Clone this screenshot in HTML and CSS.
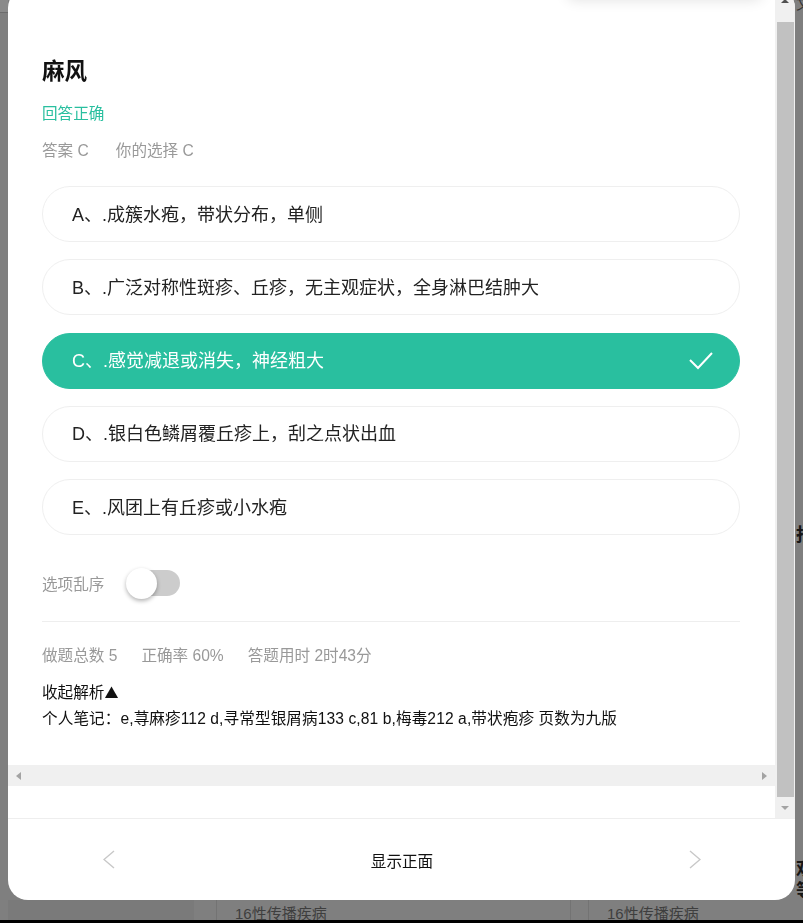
FILE: index.html
```html
<!DOCTYPE html>
<html lang="zh-CN">
<head>
<meta charset="utf-8">
<title>麻风</title>
<link rel="stylesheet" href="styles.css">
</head>
<body>
<div class="page">
  <div class="gutter-left"><div class="gutter-head"></div></div>
  <div class="page-main">
    <div class="page-fill"></div>
    <div class="card-row">
      <div class="side-col"></div>
      <div class="gap-col"></div>
      <div class="card-col">16性传播疾病</div>
      <div class="gap-col2"></div>
      <div class="card-col card-col-2">16性传播疾病</div>
    </div>
  </div>
  <div class="gutter-right">
    <div class="frag frag-top">文</div>
    <div class="frag frag-mid">报</div>
    <div class="frag frag-b1">观</div>
    <div class="frag frag-b2">等</div>
  </div>
</div>

<div class="toast-shadow"></div>

<div class="modal">
  <div class="main">
    <div class="content">
      <div class="inner">
        <h1 class="title">麻风</h1>
        <div class="status">回答正确</div>
        <div class="answer"><span>答案 C</span><span>你的选择 C</span></div>
        <div class="options">
          <div class="option">A、.成簇水疱，带状分布，单侧</div>
          <div class="option">B、.广泛对称性斑疹、丘疹，无主观症状，全身淋巴结肿大</div>
          <div class="option selected">C、.感觉减退或消失，神经粗大
            <svg class="check" width="24" height="24" viewBox="0 0 24 24"><polyline points="1,11 9,19 23,4" fill="none" stroke="#fff" stroke-width="2"/></svg>
          </div>
          <div class="option">D、.银白色鳞屑覆丘疹上，刮之点状出血</div>
          <div class="option">E、.风团上有丘疹或小水疱</div>
        </div>
        <div class="shuffle">
          <span>选项乱序</span>
          <div class="toggle"><div class="knob"></div></div>
        </div>
        <div class="divider"></div>
        <div class="stats"><span>做题总数 5</span><span>正确率 60%</span><span>答题用时 2时43分</span></div>
        <div class="collapse">收起解析<span class="tri">▲</span></div>
        <div class="notes">个人笔记：e,荨麻疹112 d,寻常型银屑病133 c,81 b,梅毒212 a,带状疱疹 页数为九版</div>
      </div>
      <div class="hbar"><span class="arr-left"></span><span class="arr-right"></span></div>
      <div class="spacer"></div>
    </div>
    <div class="vbar">
      <div class="vbtn-up"><span class="arr-up"></span></div>
      <div class="vtrack"><div class="vthumb"></div></div>
      <div class="vbtn-down"><span class="arr-down"></span></div>
    </div>
  </div>
  <div class="footer">
    <svg width="12" height="20" viewBox="0 0 12 20"><polyline points="11,1 1,9.5 11,18" fill="none" stroke="#c8c8c8" stroke-width="1.4"/></svg>
    <span class="footer-text">显示正面</span>
    <svg width="12" height="20" viewBox="0 0 12 20"><polyline points="1,1 11,9.5 1,18" fill="none" stroke="#c8c8c8" stroke-width="1.4"/></svg>
  </div>
</div>
</body>
</html>
```

FILE: styles.css
```css
* { box-sizing: border-box; }
html, body { margin: 0; padding: 0; }
body {
  background: #000;
  height: 923px;
  overflow: hidden;
  font-family: "Liberation Sans", "Noto Sans CJK SC", sans-serif;
}
.page {
  height: 920px;
  background: #7f7f7f;
  display: flex;
  overflow: hidden;
}
.gutter-left { width: 8px; }
.gutter-head { height: 13px; background: #8a8a8a; border-bottom: 1px solid #6c6c6c; }
.page-main { width: 788px; display: flex; flex-direction: column; }
.page-fill { flex: 1; }
.card-row { height: 20px; display: flex; overflow: hidden; }
.side-col { width: 186px; background: #7a7a7a; }
.gap-col { width: 22px; }
.card-col {
  width: 354px;
  border-left: 1px solid #737373;
  padding: 4px 0 0 18px;
  font-size: 15px;
  line-height: 20px;
  color: #3e3e3e;
  white-space: nowrap;
}
.gap-col2 { width: 18px; border-left: 1px solid #737373; }
.card-col-2 { width: auto; flex: 1; }
.gutter-right { flex: 1; overflow: hidden; position: relative; }
.frag { font-size: 18px; font-weight: bold; color: #161616; line-height: 20px; white-space: nowrap; }
.frag-top { margin-top: -6px; font-size: 15px; font-weight: normal; color: #333; }
.frag-mid { margin-top: 511px; }
.frag-b1 { margin-top: 314px; }
.frag-b2 { margin-top: 2px; }

.toast-shadow {
  position: fixed;
  top: -40px;
  left: 567px;
  width: 195px;
  height: 40px;
  background: #fff;
  border-radius: 8px;
  box-shadow: 0 0 14px rgba(0, 0, 0, 0.12);
  z-index: 2;
}

.modal {
  position: fixed;
  left: 8px;
  top: -12px;
  width: 787px;
  height: 912px;
  background: #fff;
  border-radius: 20px;
  overflow: hidden;
  display: flex;
  flex-direction: column;
  z-index: 1;
}
.main { height: 830px; display: flex; }
.content { flex: 1; display: flex; flex-direction: column; min-width: 0; }
.inner { flex: 1; padding: 70px 35px 0 34px; }
.title {
  margin: 0;
  font-size: 22.5px;
  line-height: 28px;
  font-weight: bold;
  color: #111;
}
.status { margin-top: 18px; font-size: 15.6px; line-height: 20px; color: #29bf9f; }
.answer { margin-top: 17px; font-size: 15.6px; line-height: 20px; color: #999; display: flex; gap: 27px; }
.options { margin-top: 25px; display: flex; flex-direction: column; gap: 17.25px; }
.option {
  height: 56px;
  border: 1px solid #efefef;
  border-radius: 28px;
  padding: 0 26px 3px 29px;
  display: flex;
  align-items: center;
  justify-content: space-between;
  font-size: 18px;
  color: #222;
}
.option.selected { background: #29bf9f; border-color: #29bf9f; color: #fff; }
.check { flex: none; margin-top: 3px; }
.shuffle {
  margin-top: 33px;
  height: 30px;
  display: flex;
  align-items: center;
  gap: 22px;
  font-size: 15.6px;
  color: #999;
}
.toggle {
  position: relative;
  width: 52px;
  height: 26px;
  border-radius: 13px;
  background: #ccc;
  margin-left: 2px;
}
.knob {
  position: absolute;
  left: -2px;
  top: -2px;
  width: 31px;
  height: 31px;
  border-radius: 50%;
  background: #fff;
  box-shadow: 0 2px 4px rgba(0, 0, 0, 0.3);
}
.divider { margin-top: 23px; height: 1px; background: #eee; }
.stats { margin-top: 24px; font-size: 15.6px; line-height: 20px; color: #999; display: flex; gap: 24px; }
.collapse { margin-top: 13px; font-size: 15.6px; line-height: 26px; color: #111; }
.tri { font-family: "Noto Sans CJK SC", sans-serif; font-size: 14px; }
.notes { font-size: 15.6px; line-height: 26px; color: #111; white-space: nowrap; letter-spacing: 0.1px; }

.hbar {
  height: 21px;
  background: #f0f0f0;
  display: flex;
  align-items: center;
  justify-content: space-between;
  padding: 0 8px;
}
.arr-left { width: 0; height: 0; border-top: 4px solid transparent; border-bottom: 4px solid transparent; border-right: 5px solid #a3a3a3; }
.arr-right { width: 0; height: 0; border-top: 4px solid transparent; border-bottom: 4px solid transparent; border-left: 5px solid #a3a3a3; }
.spacer { height: 32px; }

.vbar { width: 20px; background: #f0f0f0; display: flex; flex-direction: column; }
.vbtn-up { height: 19px; display: flex; align-items: flex-end; justify-content: center; padding-bottom: 4px; }
.vbtn-down { height: 20px; display: flex; justify-content: center; padding-top: 8px; }
.arr-up { width: 0; height: 0; border-left: 4.5px solid transparent; border-right: 4.5px solid transparent; border-bottom: 4px solid #505050; }
.arr-down { width: 0; height: 0; border-left: 4.5px solid transparent; border-right: 4.5px solid transparent; border-top: 4px solid #a3a3a3; }
.vtrack { flex: 1; padding: 15px 1px 1px 2px; display: flex; }
.vthumb { flex: 1; background: #c1c1c1; }

.footer {
  flex: 1;
  border-top: 1px solid #eee;
  display: flex;
  align-items: center;
  justify-content: space-between;
  padding: 0 94px 0 95px;
}
.footer-text { font-size: 15.6px; color: #111; }
```
